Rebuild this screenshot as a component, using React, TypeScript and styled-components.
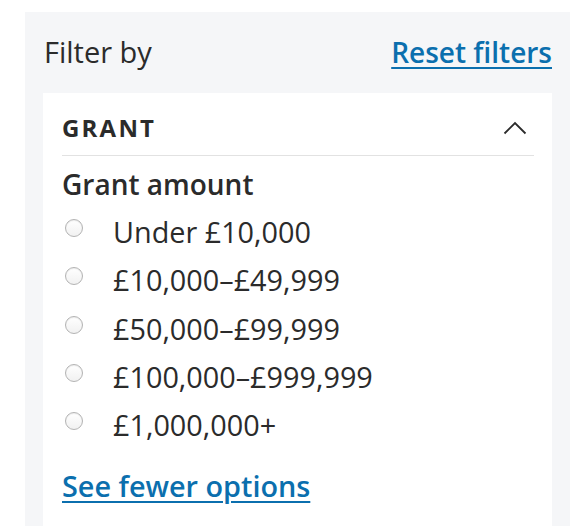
import React from "react";
import styled, { createGlobalStyle } from "styled-components";

const Global = createGlobalStyle`
  html, body { margin: 0; padding: 0; background: #ffffff; }
  body { font-family: "Open Sans", "Noto Sans", sans-serif; color: #2b2b2b; }
  * { box-sizing: border-box; }
`;

const Page = styled.div`
  padding: 12px 12px 0 25px;
  height: 526px;
  overflow: hidden;
`;

const Panel = styled.aside`
  background: #f5f6f8;
  width: 545px;
  height: 530px;
  padding: 21px 18px 0 18px;
`;

const PanelHeader = styled.div`
  display: flex;
  justify-content: space-between;
  align-items: baseline;
  margin-left: 1px;
  margin-bottom: 22px;
`;

const Title = styled.h2`
  margin: 0;
  font-size: 29px;
  line-height: 38px;
  font-weight: 400;
  color: #2b2b2b;
`;

const Link = styled.a<{ $size?: number }>`
  font-size: ${(p) => p.$size ?? 28}px;
  line-height: 38px;
  font-weight: 600;
  color: #0b6fae;
  text-decoration: underline;
  text-decoration-thickness: 2px;
  text-underline-offset: 4px;
  cursor: pointer;
`;

const Card = styled.section`
  background: #ffffff;
  padding: 19px 18px 0 19px;
  height: 460px;
`;

const SectionHeader = styled.div`
  display: flex;
  justify-content: space-between;
  align-items: center;
  padding-bottom: 11px;
  border-bottom: 1.5px solid #e2e2e2;
`;

const SectionTitle = styled.h3`
  margin: 0;
  font-size: 24px;
  line-height: 32px;
  font-weight: 700;
  letter-spacing: 2.2px;
  text-transform: uppercase;
  color: #2b2b2b;
`;

const Chevron = styled.svg`
  width: 24px;
  height: 14px;
  margin-right: 7px;
`;

const GroupLegend = styled.h4`
  margin: 9px 0 5px 0;
  font-size: 28px;
  line-height: 38px;
  font-weight: 600;
  color: #2b2b2b;
`;

const Options = styled.ul`
  list-style: none;
  margin: 0;
  padding: 0;
`;

const Option = styled.li`
  display: flex;
  align-items: center;
  height: 48.25px;
  font-size: 28.8px;
  line-height: 38px;
  color: #2b2b2b;
`;

const Radio = styled.span`
  width: 18px;
  height: 18px;
  border-radius: 50%;
  border: 1px solid #b3b3b3;
  background: linear-gradient(#ffffff, #f1f1f1);
  box-shadow: inset 0 1px 1px rgba(0, 0, 0, 0.08);
  margin: 0 30px 0 3px;
  transform: translateY(-4px);
  flex: none;
`;

const MoreLink = styled(Link)`
  display: inline-block;
  margin-top: 18px;
`;

const options = [
  "Under £10,000",
  "£10,000–£49,999",
  "£50,000–£99,999",
  "£100,000–£999,999",
  "£1,000,000+",
];

export default function App() {
  return (
    <>
      <Global />
      <Page>
        <Panel>
          <PanelHeader>
            <Title>Filter by</Title>
            <Link>Reset filters</Link>
          </PanelHeader>
          <Card>
            <SectionHeader>
              <SectionTitle>Grant</SectionTitle>
              <Chevron viewBox="0 0 24 14" fill="none">
                <path d="M1.5 12.5 L12 2 L22.5 12.5" stroke="#2b2b2b" strokeWidth="1.8" />
              </Chevron>
            </SectionHeader>
            <GroupLegend>Grant amount</GroupLegend>
            <Options>
              {options.map((o) => (
                <Option key={o}>
                  <Radio />
                  {o}
                </Option>
              ))}
            </Options>
            <MoreLink $size={28.8}>See fewer options</MoreLink>
          </Card>
        </Panel>
      </Page>
    </>
  );
}
